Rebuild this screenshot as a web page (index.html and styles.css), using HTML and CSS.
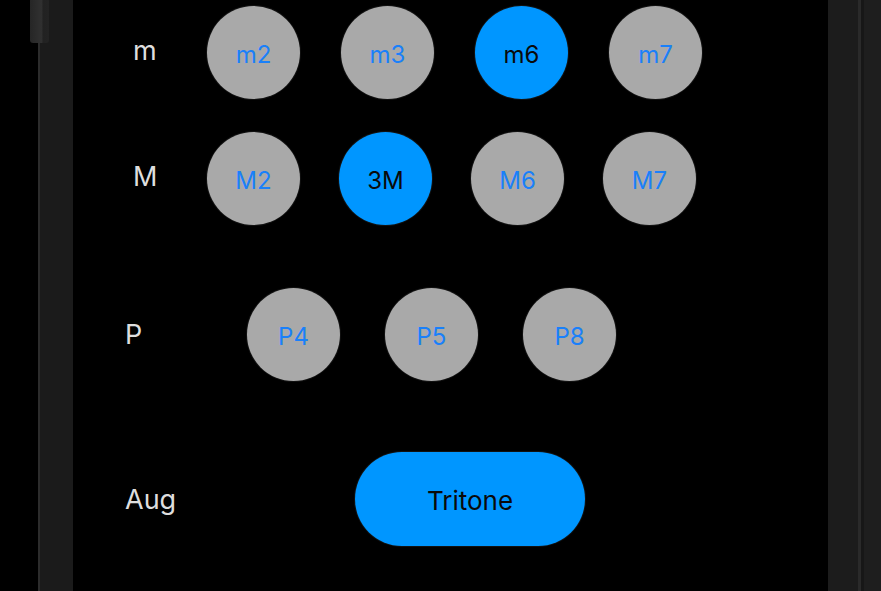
FILE: index.html
```html
<!DOCTYPE html>
<html lang="en">
<head>
  <meta charset="UTF-8">
  <meta name="viewport" content="width=device-width, initial-scale=1.0">
  <title>Intervals</title>
  <link rel="stylesheet" href="styles.css">
</head>
<body>
  <div class="screen">
    <div class="rail-left">
      <div class="rail-gap"></div>
      <div class="rail-line"></div>
      <div class="rail-fill"></div>
      <div class="thumb"></div>
    </div>

    <div class="main">
      <div class="row row-minor">
        <span class="label">m</span>
        <div class="keys">
          <button class="key">m2</button>
          <button class="key">m3</button>
          <button class="key active">m6</button>
          <button class="key">m7</button>
        </div>
      </div>

      <div class="row row-major">
        <span class="label">M</span>
        <div class="keys">
          <button class="key">M2</button>
          <button class="key active">3M</button>
          <button class="key">M6</button>
          <button class="key">M7</button>
        </div>
      </div>

      <div class="row row-perfect">
        <span class="label">P</span>
        <div class="keys">
          <button class="key">P4</button>
          <button class="key">P5</button>
          <button class="key">P8</button>
        </div>
      </div>

      <div class="row row-aug">
        <span class="label">Aug</span>
        <div class="keys">
          <button class="key pill active">Tritone</button>
        </div>
      </div>
    </div>

    <div class="rail-right">
      <div class="rail-fill-r"></div>
      <div class="rail-line-r"></div>
      <div class="rail-dark-r"></div>
      <div class="rail-edge-r"></div>
    </div>
  </div>
</body>
</html>
```

FILE: styles.css
```css
body {
  margin: 0;
  background: #000;
  font-family: "Inter", "Liberation Sans", sans-serif;
  overflow: hidden;
}
.screen {
  display: flex;
  width: 881px;
  height: 591px;
}

/* side rails */
.rail-left {
  position: relative;
  display: flex;
  width: 73px;
  flex-shrink: 0;
}
.rail-gap {
  width: 38px;
  background: #000;
}
.rail-line {
  width: 2px;
  background: #2c2c2c;
}
.rail-fill {
  width: 33px;
  background: #1b1b1b;
}
.thumb {
  position: absolute;
  left: 30px;
  top: 0;
  width: 19px;
  height: 43px;
  border-radius: 0 0 3px 3px;
  background: linear-gradient(to right, #262626, #2e2e2e 45%, #303030 60%, #222 70%, #232323);
}
.rail-right {
  display: flex;
  width: 53px;
  flex-shrink: 0;
}
.rail-fill-r {
  width: 30px;
  background: #1c1c1c;
}
.rail-line-r {
  width: 3px;
  background: #2a2a2a;
}
.rail-dark-r {
  width: 3px;
  background: #171717;
}
.rail-edge-r {
  flex: 1;
  background: #1e1e1e;
}

/* content */
.main {
  flex: 1;
  background: #000;
  display: flex;
  flex-direction: column;
  padding-top: 5px;
}
.row {
  display: flex;
  align-items: center;
  height: 94px;
}
.row-major {
  margin-top: 32px;
}
.row-perfect {
  margin-top: 62px;
}
.row-aug {
  margin-top: 71px;
}
.label {
  box-sizing: border-box;
  color: #dedede;
  font-size: 27px;
  flex-shrink: 0;
  padding-bottom: 4px;
}
.row-minor .label,
.row-major .label {
  width: 134px;
  padding-left: 60px;
}
.row-perfect .label {
  width: 174px;
  padding-left: 52px;
  padding-bottom: 0;
}
.row-aug .label {
  width: 282px;
  padding-left: 52px;
  padding-bottom: 0;
}
.keys {
  display: flex;
  gap: 41px;
}
.row-major .keys {
  gap: 39px;
}
.row-perfect .keys {
  gap: 45px;
}
.key {
  width: 93px;
  height: 93px;
  border: none;
  border-radius: 50%;
  background: #a9a9a9;
  color: #1a80fa;
  font-family: inherit;
  font-size: 24px;
  padding: 4px 0 0;
  box-shadow: 0 0 0 1px #111;
}
.key.active {
  background: #0096ff;
  color: #0a0a0a;
}
.pill {
  width: 230px;
  height: 94px;
  border-radius: 47px;
  font-size: 26px;
  padding-top: 2px;
}
```
